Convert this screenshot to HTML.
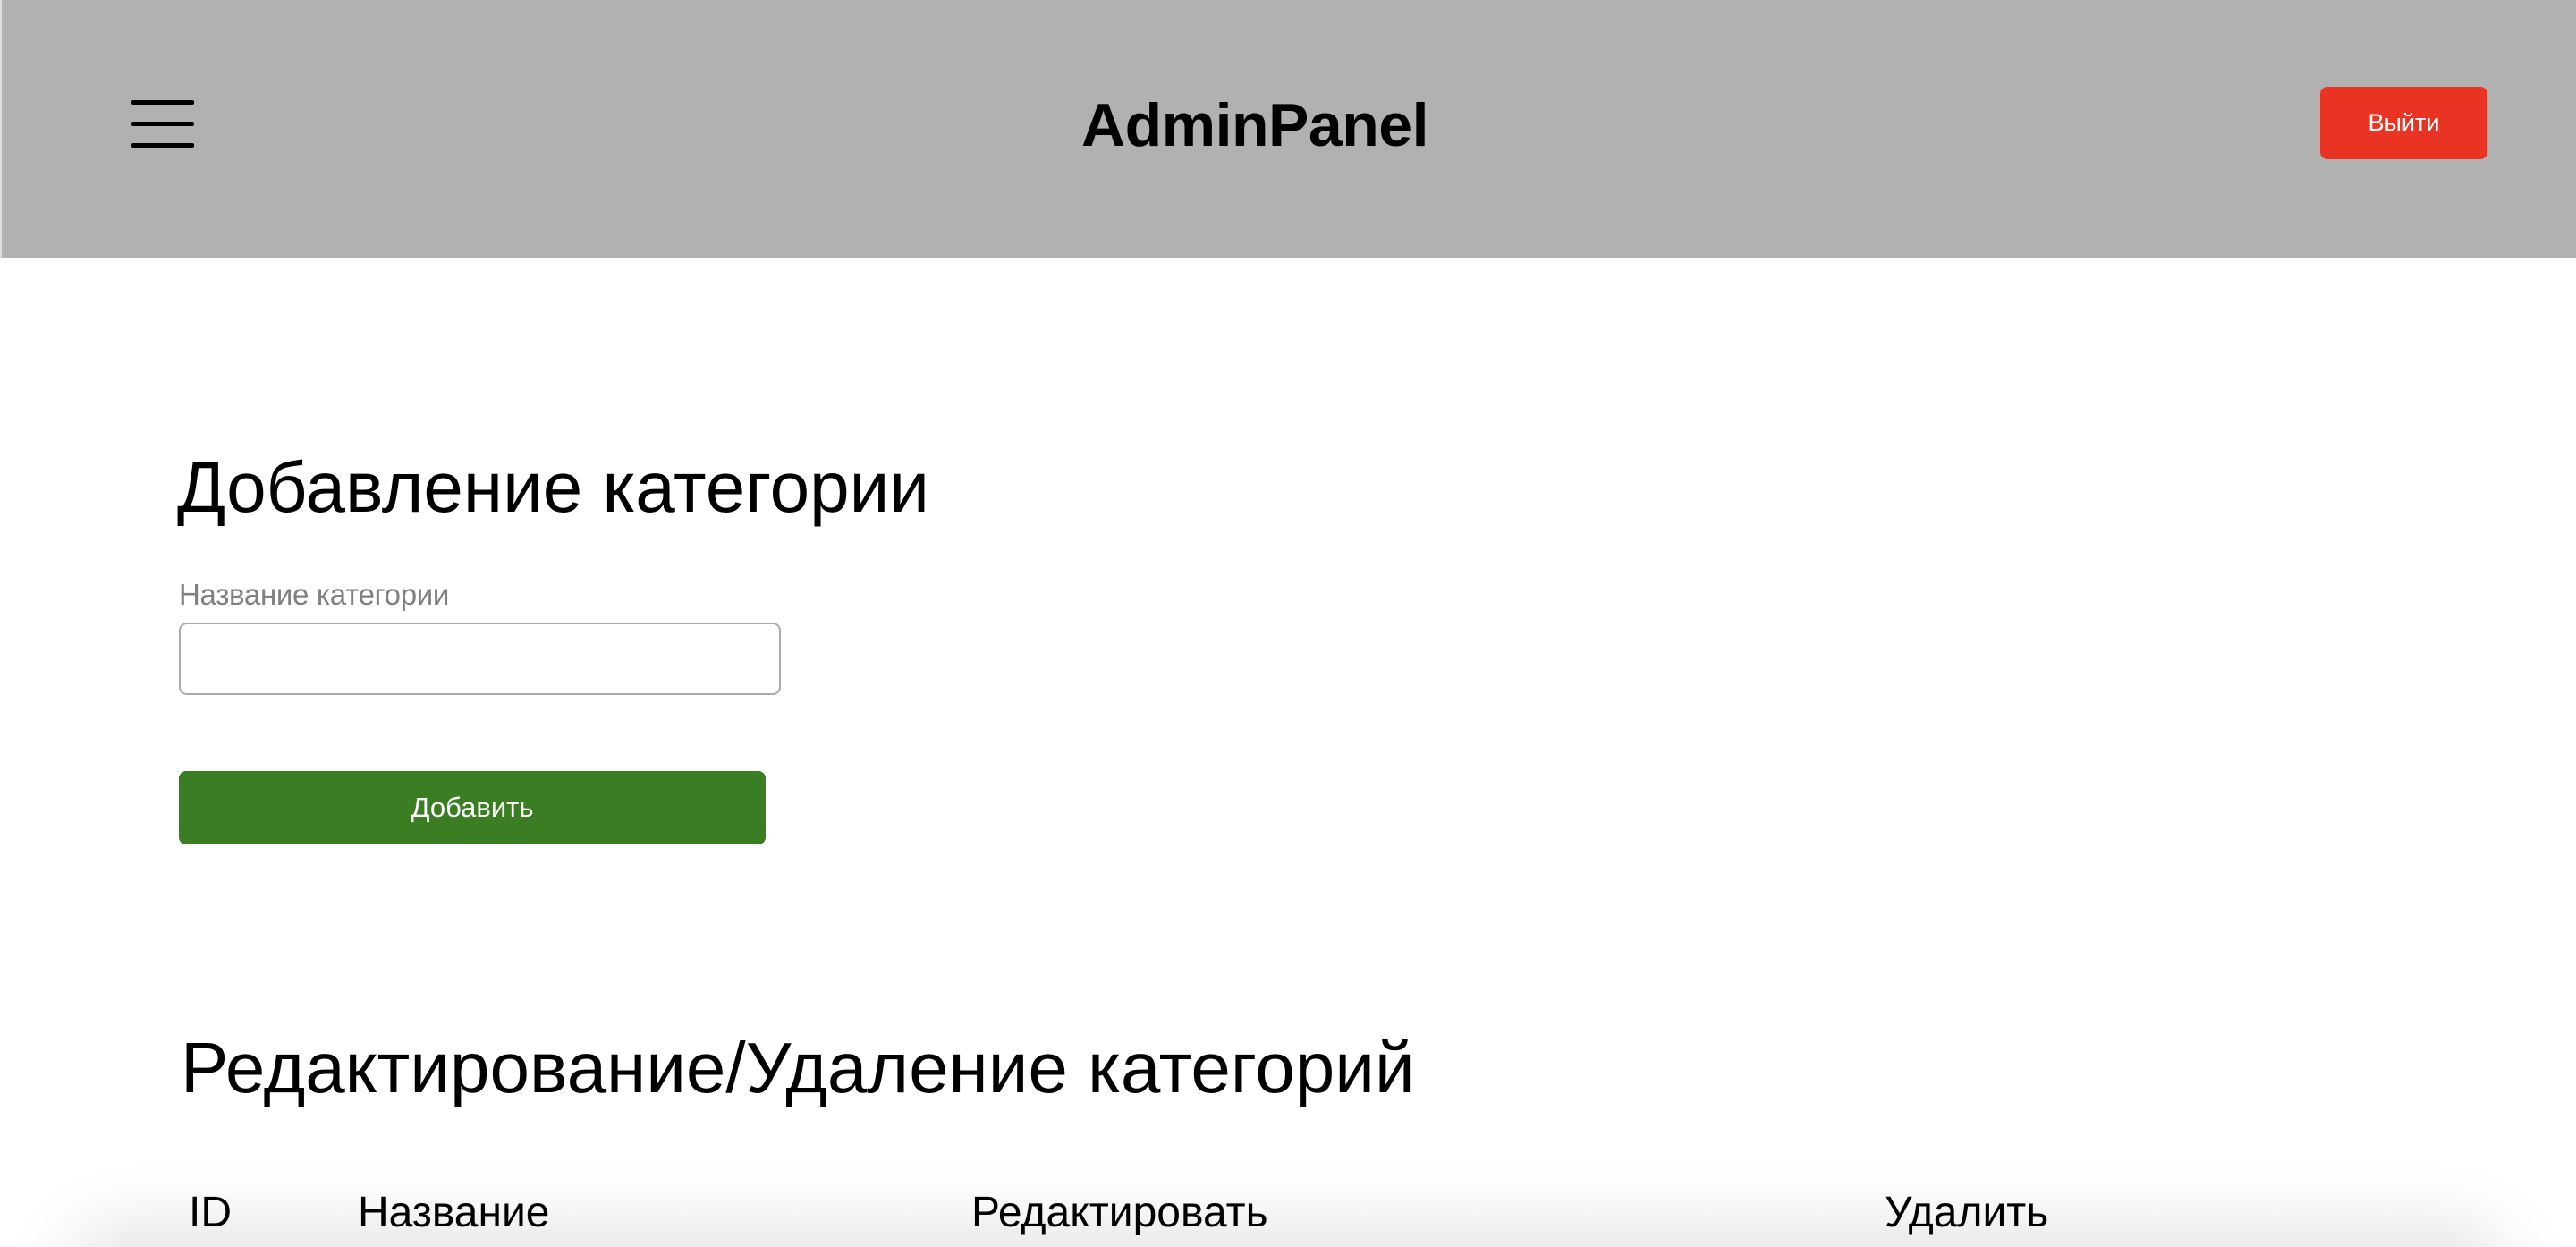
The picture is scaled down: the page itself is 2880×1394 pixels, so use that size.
<!DOCTYPE html>
<html><head><meta charset="utf-8"><style>
html,body{margin:0;padding:0;width:2880px;height:1394px;overflow:hidden;background:#fff;font-family:"Liberation Sans","DejaVu Sans",sans-serif;position:relative}
.hdr{position:absolute;left:0;top:0;width:2880px;height:288px;background:#b1b1b1;border-left:2px solid #ddd;box-sizing:border-box}
.hb{position:absolute;left:145px;width:70px;height:5px;background:#000;border-radius:2px}
.logo{position:absolute;left:1207px;top:100px;font-weight:bold;font-size:68px;line-height:80px;color:#000;letter-spacing:-0.5px}
.out{position:absolute;left:2592px;top:97px;width:187px;height:81px;background:#e93323;border-radius:8px;color:#fff;font-size:27px;line-height:81px;text-align:center}
.h{position:absolute;font-size:80px;color:#000;white-space:nowrap;line-height:1}
.lbl{position:absolute;left:200px;top:646px;font-size:33px;color:#808080;letter-spacing:-0.3px}
.inp{position:absolute;left:200px;top:696px;width:673px;height:81px;border:2px solid #aaa;border-radius:9px;box-sizing:border-box}
.add{position:absolute;left:200px;top:862px;width:656px;height:82px;background:#3a7d22;border-radius:8px;color:#fff;font-size:31px;line-height:82px;text-align:center}
.clip{position:absolute;left:0;top:1200px;width:2880px;height:194px;overflow:hidden}
.card{position:absolute;left:100px;top:195px;width:2680px;height:100px;box-shadow:0 0 80px 20px rgba(0,0,0,0.13);border-radius:30px}
.th{position:absolute;top:1328px;font-size:48px;color:#000;white-space:nowrap}
</style></head><body>
<div class="hdr">
<div class="hb" style="top:112px"></div>
<div class="hb" style="top:136px"></div>
<div class="hb" style="top:160px"></div>
<div class="logo">AdminPanel</div>
<div class="out">Выйти</div>
</div>
<div class="h" style="left:198px;top:505px">Добавление категории</div>
<div class="lbl">Название категории</div>
<div class="inp"></div>
<div class="add">Добавить</div>
<div class="h" style="left:202px;top:1154px">Редактирование/Удаление категорий</div>
<div class="clip"><div class="card"></div></div>
<div class="th" style="left:211px">ID</div>
<div class="th" style="left:400px">Название</div>
<div class="th" style="left:1086px">Редактировать</div>
<div class="th" style="left:2107px">Удалить</div>
</body></html>
